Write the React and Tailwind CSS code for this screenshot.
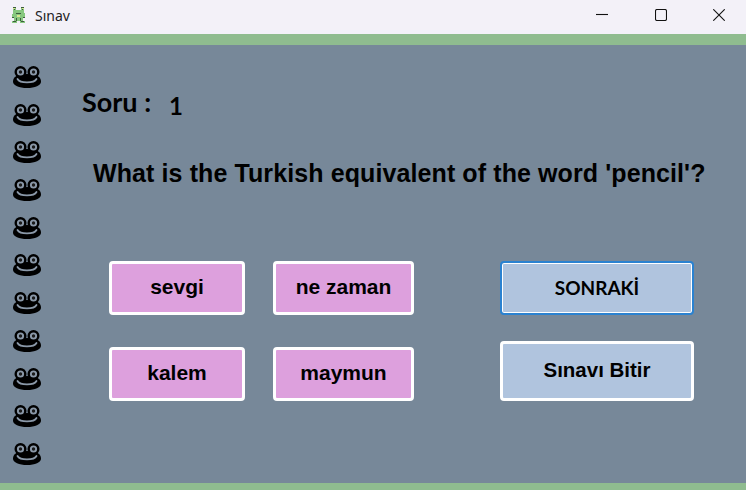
const FROG_COUNT = 11

function Frog() {
  return (
    <svg width="28" height="22" viewBox="0 0 28 22" className="block">
      <circle cx="7.500" cy="6" r="6" fill="#000" />
      <circle cx="20.500" cy="6" r="6" fill="#000" />
      <path d="M0 15.500C0 11 4 8 14 8s14 3 14 7.500c0 4-6 6.500-14 6.500S0 19.500 0 15.500z" fill="#000" />
      <circle cx="7.500" cy="6" r="3.600" fill="#8a98a8" />
      <circle cx="20.500" cy="6" r="3.600" fill="#8a98a8" />
      <circle cx="7.500" cy="6" r="1.700" fill="#1a1a1a" />
      <circle cx="20.500" cy="6" r="1.700" fill="#1a1a1a" />
      <path d="M4.500 13c2.500 4.500 16.500 4.500 19 0" fill="none" stroke="#8a98a8" strokeWidth="1.800" strokeLinecap="round" />
    </svg>
  )
}

function TitleIcon() {
  return (
    <svg width="13" height="16" viewBox="0 0 13 16" className="block" shapeRendering="crispEdges">
      <path d="M1 1h3v2h5V1h3v5l1 1v3l-2 1v3h2v2H8v-2H5v2H0v-2h2v-3L0 10V7l1-1z" fill="#86c77f" />
      <path d="M1 0h3v1H1zM9 0h3v1H9zM2 2h1v1H2zM10 2h1v1h-1zM4 6h5v1H4zM0 10h2v1H0zM11 10h2v1h-2zM4 11h1v3H4zM8 11h1v3H8zM1 14h3v1H1zM9 14h3v1H9z" fill="#3d5c3d" />
      <path d="M1 1h2v1H1zM10 1h2v1h-2zM5 8h3v2H5z" fill="#d6e58f" />
    </svg>
  )
}

function WindowControls() {
  return (
    <div className="flex items-center gap-[46.500px] pr-[21px]">
      <svg width="12" height="12" viewBox="0 0 12 12" className="block"><path d="M0 5.500h12" stroke="#111" strokeWidth="1.100" /></svg>
      <svg width="12" height="12" viewBox="0 0 12 12" className="block"><rect x="0.500" y="0.500" width="11" height="11" rx="1.500" fill="none" stroke="#111" strokeWidth="1.100" /></svg>
      <svg width="12" height="12" viewBox="0 0 12 12" className="block"><path d="M0.300 0.300l11.400 11.400M11.700 0.300L0.300 11.700" stroke="#111" strokeWidth="1.100" /></svg>
    </div>
  )
}

function AnswerButton({ label }) {
  return (
    <button className="h-[54px] pb-[2px] bg-[#dda0dd] border-[3px] border-white rounded-[4px] text-[21px] font-bold text-black">
      {label}
    </button>
  )
}

export default function App() {
  return (
    <div className="w-[746px] h-[490px] flex flex-col overflow-hidden font-['Liberation_Sans',sans-serif] text-black">
      {/* Title bar */}
      <div className="h-[34px] pb-[4px] bg-[#f3f1f8] flex items-center justify-between">
        <div className="flex items-center pl-[12px] gap-[10px] text-[14px] text-[#222] font-['Noto_Sans',sans-serif]">
          <TitleIcon />
          <span>Sınav</span>
        </div>
        <WindowControls />
      </div>

      <div className="h-[11px] bg-[#8fbc8f]" />

      <div className="flex-1 flex bg-[#778899]">
        {/* Frog column */}
        <div className="w-[54px] pt-[21px] pl-[13px] flex flex-col gap-[15.700px]">
          {Array.from({ length: FROG_COUNT }).map((_, i) => (
            <Frog key={i} />
          ))}
        </div>

        <div className="flex-1 flex flex-col">
          <div className="flex items-baseline pl-[28px] pt-[41px] font-['Lato',sans-serif] font-bold">
            <span className="text-[27px] leading-[32px]">Soru :</span>
            <span className="text-[24px] leading-[32px] ml-[18px] relative top-[3px]">1</span>
          </div>

          <p className="pl-[39px] mt-[39px] text-[25px] leading-[30px] tracking-[0.100px] font-bold whitespace-nowrap">
            What is the Turkish equivalent of the word 'pencil'?
          </p>

          <div className="flex pl-[55px] mt-[73px]">
            <div className="grid grid-cols-[136px_141px] gap-x-[28px] gap-y-[32px] content-start">
              <AnswerButton label="sevgi" />
              <AnswerButton label="ne zaman" />
              <AnswerButton label="kalem" />
              <AnswerButton label="maymun" />
            </div>

            <div className="ml-[86px] w-[194px] flex flex-col gap-[26px]">
              <button className="h-[54px] bg-[#b0c4de] border-2 border-[#2b82d0] rounded-[4px] shadow-[inset_0_0_0_1px_#fff] text-[19px] font-bold font-['Lato',sans-serif]">
                SONRAKİ
              </button>
              <button className="h-[60px] pb-[2px] bg-[#b0c4de] border-[3px] border-white rounded-[4px] text-[20.500px] font-bold">
                Sınavı Bitir
              </button>
            </div>
          </div>
        </div>
      </div>

      <div className="h-[7px] bg-[#8fbc8f]" />
    </div>
  )
}
